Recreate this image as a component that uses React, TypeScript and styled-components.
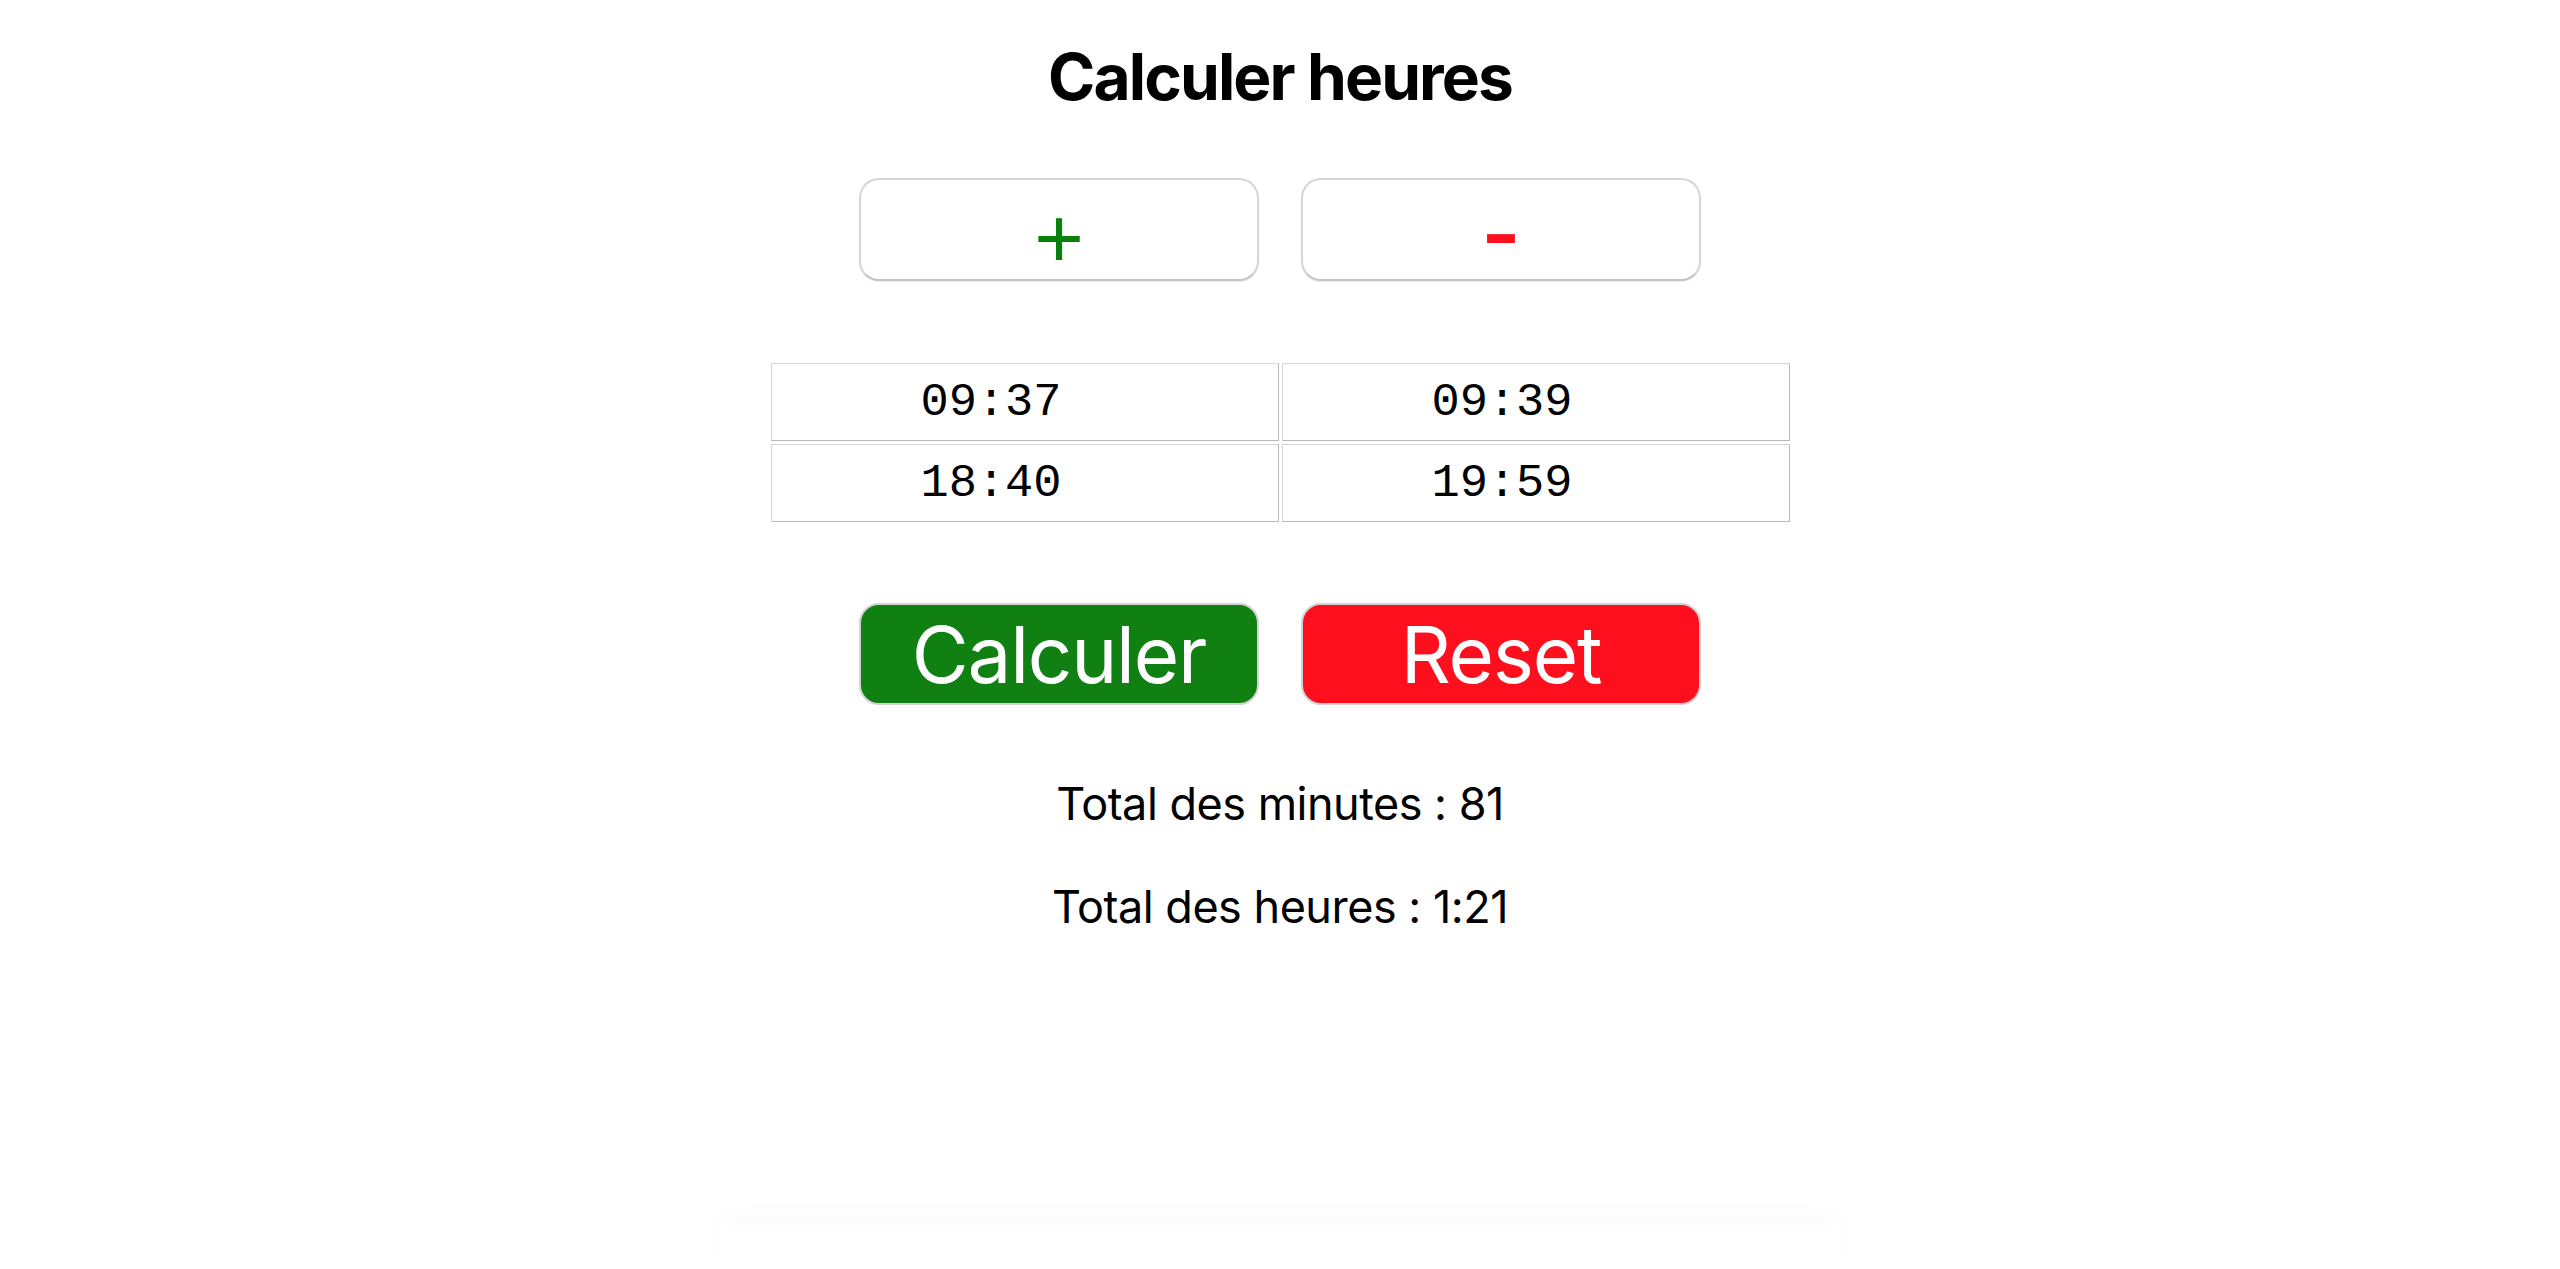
import React from "react";
import styled, { createGlobalStyle } from "styled-components";

const GlobalStyle = createGlobalStyle`
  html, body {
    margin: 0;
    padding: 0;
    background: #ffffff;
  }
  body {
    font-family: Inter, "Noto Sans", "Liberation Sans", sans-serif;
    color: #000;
  }
`;

const Page = styled.div`
  min-height: 100vh;
  display: flex;
  flex-direction: column;
  align-items: center;
  padding-top: 45px;
  box-sizing: border-box;
`;

const Title = styled.h1`
  margin: 0;
  font-family: Inter, "Liberation Sans", sans-serif;
  font-weight: 700;
  font-size: 64px;
  line-height: 1;
  letter-spacing: -1.9px;
`;

const ButtonRow = styled.div<{ $top: number }>`
  display: flex;
  gap: 42px;
  margin-top: ${(p) => p.$top}px;
`;

const SignButton = styled.button`
  width: 400px;
  height: 103px;
  box-sizing: border-box;
  border: 2px solid #d5d5d5;
  border-bottom-color: #c4c4c4;
  border-radius: 20px;
  background: #ffffff;
  box-shadow: 0 1px 1px rgba(0, 0, 0, 0.08);
  display: flex;
  align-items: center;
  justify-content: center;
  padding: 0;
  overflow: visible;
  cursor: pointer;
`;

const Sign = styled.span<{ $color: string; $size: number; $shift: number }>`
  font-family: "Liberation Sans", Arial, sans-serif;
  font-size: ${(p) => p.$size}px;
  line-height: 1;
  color: ${(p) => p.$color};
  padding-top: ${(p) => p.$shift}px;
`;

const TimeGrid = styled.div`
  display: grid;
  grid-template-columns: 508px 508px;
  grid-auto-rows: 78px;
  gap: 3px;
  margin-top: 82px;
`;

const TimeCell = styled.div`
  box-sizing: border-box;
  border: 1px solid #d6d6d6;
  border-right-color: #b9b9b9;
  border-bottom-color: #b9b9b9;
  display: flex;
  align-items: center;
  padding-left: 149px;
  font-family: "Liberation Mono", "DejaVu Sans Mono", monospace;
  font-size: 47px;
  line-height: 1;
  color: #000;
`;

const ActionButton = styled.button<{ $bg: string }>`
  width: 400px;
  height: 102px;
  box-sizing: border-box;
  border: 2px solid #d2d2d2;
  border-radius: 20px;
  background: ${(p) => p.$bg};
  color: #ffffff;
  font-family: Inter, "Liberation Sans", sans-serif;
  font-weight: 400;
  font-size: 78px;
  line-height: 1;
  letter-spacing: -1.2px;
  display: flex;
  align-items: center;
  justify-content: center;
  padding: 2px 0 0;
  cursor: pointer;
`;

const Total = styled.p<{ $top: number }>`
  margin: ${(p) => p.$top}px 0 0;
  font-family: Inter, "Liberation Sans", sans-serif;
  font-size: 45px;
  line-height: 1;
  letter-spacing: -0.5px;
`;

const Footer = styled.div`
  margin-top: auto;
  width: 1120px;
  height: 44px;
  background: #ffffff;
  box-shadow: 0 -10px 28px rgba(0, 0, 0, 0.02);
`;

const times: string[][] = [
  ["09:37", "09:39"],
  ["18:40", "19:59"],
];

export default function App() {
  return (
    <>
      <GlobalStyle />
      <Page>
        <Title>Calculer heures</Title>
        <ButtonRow $top={69}>
          <SignButton>
            <Sign $color="#0a7f0a" $size={85} $shift={17}>+</Sign>
          </SignButton>
          <SignButton>
            <Sign $color="#fe0f1e" $size={114} $shift={0}>-</Sign>
          </SignButton>
        </ButtonRow>
        <TimeGrid>
          {times.flat().map((t, i) => (
            <TimeCell key={i}>{t}</TimeCell>
          ))}
        </TimeGrid>
        <ButtonRow $top={81}>
          <ActionButton $bg="#108012">Calculer</ActionButton>
          <ActionButton $bg="#fe0f1e">Reset</ActionButton>
        </ButtonRow>
        <Total $top={76}>Total des minutes : 81</Total>
        <Total $top={58}>Total des heures : 1:21</Total>
        <Footer />
      </Page>
    </>
  );
}
